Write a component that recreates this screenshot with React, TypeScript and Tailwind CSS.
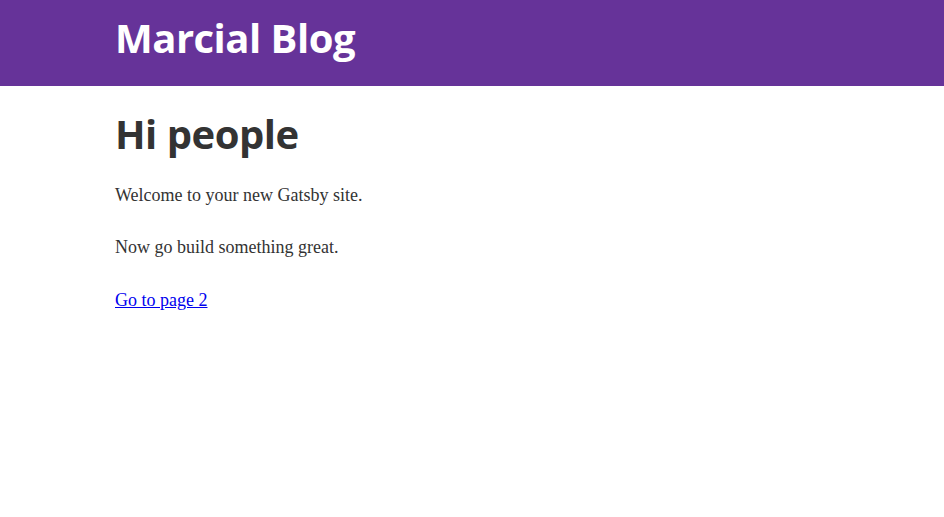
export default function App() {
  return (
    <div className="min-h-[517px] bg-white">
      <header className="bg-[#663399]">
        <div className="mx-auto w-[714px] pt-[18px] pb-[28px]">
          <h1 className="font-['Open_Sans',sans-serif] text-[40px] leading-[40px] font-bold tracking-[-0.5px] text-white">
            Marcial Blog
          </h1>
        </div>
      </header>
      <main className="mx-auto w-[714px] pt-[26px]">
        <h1 className="font-['Open_Sans',sans-serif] text-[40px] leading-[44px] font-bold tracking-[-0.5px] text-[#333]">
          Hi people
        </h1>
        <div className="mt-[26px] font-['Liberation_Serif',serif] text-[18px] leading-[26px] text-[#333]">
          <p className="mb-[26px]">Welcome to your new Gatsby site.</p>
          <p className="mb-[27px]">Now go build something great.</p>
          <a href="#" className="text-[#0000ee] underline">
            Go to page 2
          </a>
        </div>
      </main>
    </div>
  )
}
